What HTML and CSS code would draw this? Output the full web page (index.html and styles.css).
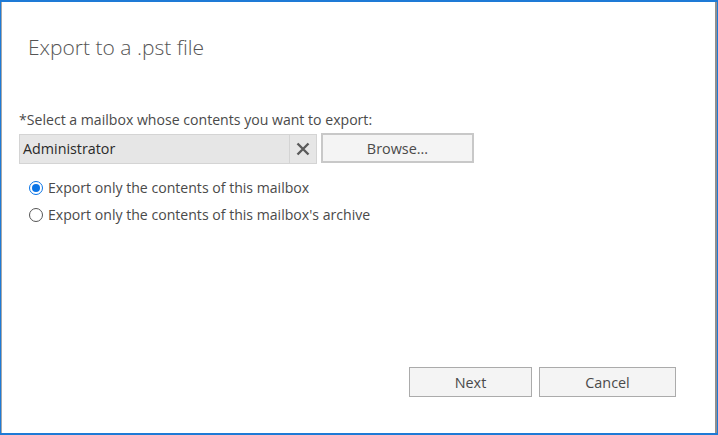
FILE: index.html
```html
<!DOCTYPE html>
<html>
<head>
<meta charset="utf-8">
<link rel="stylesheet" href="styles.css">
</head>
<body>
<div class="window">
  <div class="frame">
    <h1 class="title">Export to a .pst file</h1>
    <div class="content">
      <div class="label">*Select a mailbox whose contents you want to export:</div>
      <div class="picker">
        <div class="field">
          <span class="value">Administrator</span>
          <span class="clear">
            <svg width="14" height="14" viewBox="0 0 14 14"><path d="M1.5 1.5 L12.5 12.5 M12.5 1.5 L1.5 12.5" stroke="#5a5a5a" stroke-width="2.4" fill="none"/></svg>
          </span>
        </div>
        <button class="btn browse">Browse...</button>
      </div>
      <div class="options">
        <label class="opt"><span class="radio checked"></span>Export only the contents of this mailbox</label>
        <label class="opt"><span class="radio"></span>Export only the contents of this mailbox's archive</label>
      </div>
    </div>
    <div class="footer">
      <button class="btn next">Next</button>
      <button class="btn cancel">Cancel</button>
    </div>
  </div>
</div>
</body>
</html>
```
FILE: styles.css
```css
html, body {
  margin: 0;
  padding: 0;
  background: #ffffff;
}
.window {
  width: 718px;
  height: 435px;
  box-sizing: border-box;
  border-top: 2px solid #1e7ad6;
  border-left: 1px solid #1e7ad6;
  border-right: 1px solid #1e7ad6;
  border-bottom: 2px solid #1e7ad6;
  font-family: "Open Sans", "Noto Sans", sans-serif;
  color: #444444;
}
.frame {
  height: 100%;
  box-sizing: border-box;
  border-left: 1px solid #a8a8a8;
  border-right: 2px solid #8f8f8f;
  display: flex;
  flex-direction: column;
}
.title {
  margin: 30px 0 0 26px;
  font-size: 21px;
  font-weight: 300;
  line-height: 30px;
  color: #555555;
}
.content {
  padding: 0 0 0 17px;
  margin-top: 50px;
  flex: 1;
}
.label {
  font-size: 14.1px;
  line-height: 16px;
  color: #4a4a4a;
}
.picker {
  display: flex;
  align-items: flex-start;
  margin-top: 6px;
}
.field {
  display: flex;
  width: 298px;
  height: 30px;
  box-sizing: border-box;
  background: #e6e6e6;
  border: 1px solid #d4d4d4;
}
.value {
  flex: 1;
  font-size: 14.3px;
  line-height: 28px;
  padding-left: 3px;
  color: #2a2a2a;
}
.clear {
  width: 26px;
  border-left: 1px solid #d4d4d4;
  display: flex;
  align-items: center;
  justify-content: center;
}
.btn {
  font-family: "Open Sans", "Noto Sans", sans-serif;
  font-size: 14.4px;
  color: #4a4a4a;
  background: #f4f4f4;
  border: 1px solid #ababab;
  box-sizing: border-box;
  height: 30px;
  padding: 0;
}
.browse {
  width: 153px;
  margin-left: 4px;
  height: 30px;
  border: 2px solid #c8c8c8;
  margin-top: -1px;
}
.options {
  margin-top: 15px;
  padding-left: 10px;
  display: flex;
  flex-direction: column;
  gap: 9px;
}
.opt {
  display: flex;
  align-items: center;
  font-size: 14.1px;
  line-height: 18px;
  color: #4a4a4a;
}
.radio {
  width: 14px;
  height: 14px;
  box-sizing: border-box;
  border: 1px solid #555555;
  border-radius: 50%;
  margin-right: 5px;
  position: relative;
  background: #ffffff;
}
.radio.checked {
  border-color: #0a74e6;
}
.radio.checked::after {
  content: "";
  position: absolute;
  left: 2px;
  top: 2px;
  width: 8px;
  height: 8px;
  border-radius: 50%;
  background: #0a74e6;
}
.footer {
  display: flex;
  justify-content: flex-end;
  gap: 7px;
  padding: 0 39px 36px 0;
}
.next {
  width: 123px;
}
.cancel {
  width: 137px;
}
```
